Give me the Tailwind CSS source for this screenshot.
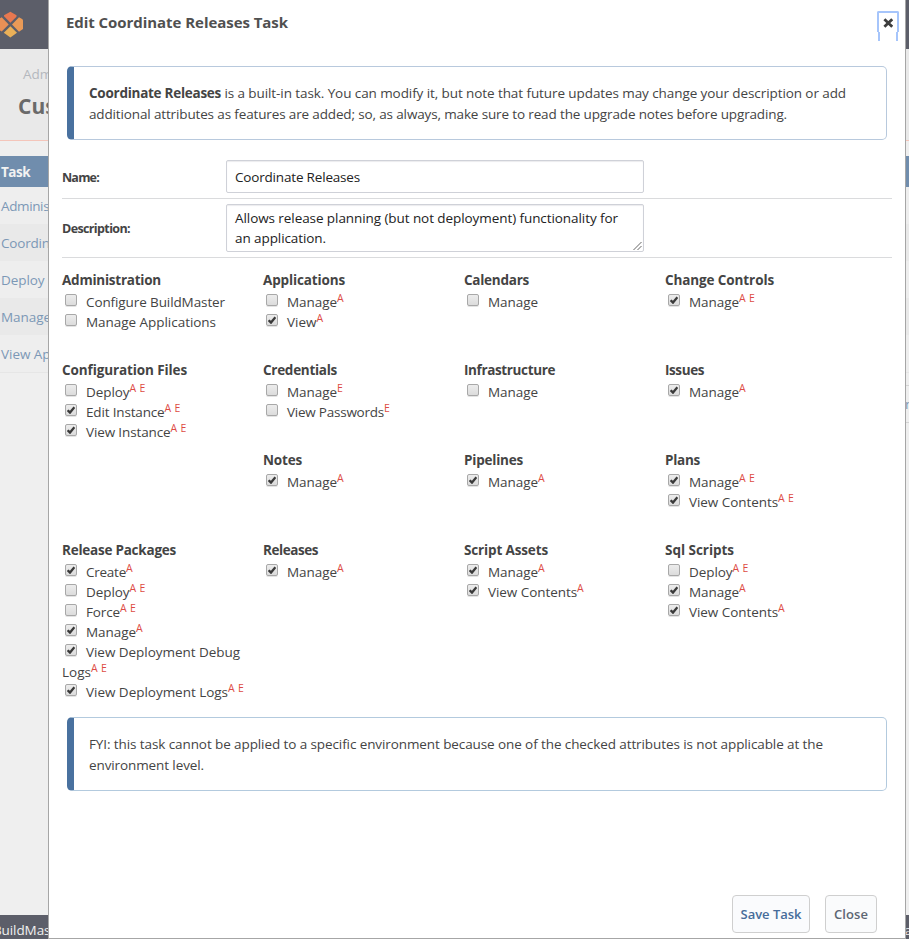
<!DOCTYPE html>
<html lang="en">
<head>
<meta charset="utf-8">
<title>Edit Coordinate Releases Task</title>
<script src="https://cdn.jsdelivr.net/npm/@tailwindcss/browser@4"></script>
</head>
<body class="relative h-[939px] w-[909px] overflow-hidden bg-[#efefef] font-['Open_Sans','Noto_Sans',sans-serif] text-[13.5px] text-[#444]">
<!-- page behind the dialog -->
<div class="flex h-[939px] flex-col whitespace-nowrap">
  <header class="h-[49px] shrink-0 bg-[#5c5e69]">
    <svg class="mt-[11px] -ml-[3px] block h-[27px] w-[27px]" viewBox="0 0 27 27">
      <path fill="#e87850" d="M13.4 .8 19.5 4.2V5.7L13.4 11.8 7 5.3V4.2Z"/>
      <path fill="#e99056" d="M4.7 6.3 11.7 13.4 4.7 20.5 2 19V7.8Z"/>
      <path fill="#e99a57" d="M22 6.3 24.7 7.8Q26 8.5 26 9.5V18L22 20.8 15 13.5Z"/>
      <path fill="#eab058" d="M13.4 15.2 20 21.8 13.4 26.4 6.8 21.8Z"/>
    </svg>
  </header>
  <div class="h-[92px] shrink-0 border-b border-[#f4c5ba] bg-[#e9e9e9] pt-[16px]">
    <div class="pl-[23px] text-[13.5px] leading-[19px] text-[#b4b8be]">Administration</div>
    <div class="pt-[8px] pl-[18px] text-[21px] leading-[28px] font-bold text-[#6a6a6a]">Customize Tasks</div>
  </div>
  <div class="h-[15px] shrink-0"></div>
  <div class="h-[31px] shrink-0 bg-[#708dad] pl-[1px] text-[13.5px] leading-[32px] font-bold text-[#f2f2f2]"><span data-w="29">Task</span></div>
  <div class="text-[13.5px] text-[#7c98b6]">
    <div class="h-[37px] bg-[#eeeeee] pl-[1px] leading-[38px]"><span data-w="65">Administer</span></div>
    <div class="h-[37px] bg-[#e9e9e9] pl-[1px] leading-[38px]"><span data-w="125">Coordinate Releases</span></div>
    <div class="h-[37px] bg-[#eeeeee] pl-[1px] leading-[38px]"><span data-w="43.5">Deploy</span></div>
    <div class="h-[37px] bg-[#e9e9e9] pl-[1px] leading-[38px]"><span data-w="50">Manage</span></div>
    <div class="h-[38px] border-b border-[#e6e6e6] bg-[#eeeeee] pl-[1px] leading-[38px]"><span data-w="103">View Application</span></div>
  </div>
  <div class="mt-[12px] flex h-[38px] justify-end text-[13.5px] leading-[37px] text-[#7c98b6]"><div class="w-[6px] border-y border-[#d4d4d4]"><span class="ml-[2px]">m</span></div></div>
  <footer class="mt-auto flex h-[24px] justify-between bg-[#5c5e69] text-[13.5px] leading-[31px] text-[#f0f0f0]"><span class="-ml-[7px]" data-w="75">BuildMaster</span><span class="-mr-[3px]">a</span></footer>
</div>

<!-- dialog -->
<section class="absolute top-0 left-[48px] flex h-[939px] w-[858px] flex-col border-x border-b border-[#a6a6a6] bg-white">
  <div class="flex h-[66px] shrink-0 justify-between pr-[6px] pl-[17px]">
    <h1 class="pt-[11px] text-[15px] leading-[22px] font-bold text-[#505050]" data-w="222">Edit Coordinate Releases Task</h1>
    <button class="mt-[11px] flex h-[30px] w-[22px] flex-col" aria-label="Close">
      <span class="flex h-[21px] w-[22px] justify-center rounded-t-[2px] border-2 border-b-0 border-[#a6c5fb] pt-[5px]">
        <svg class="h-[10px] w-[10px]" viewBox="0 0 10 10"><path d="M2.4 2.2 8.2 7.8M8.2 2.2 2.4 7.8" stroke="#3d3d3d" stroke-width="2.8" stroke-linecap="square"/></svg>
      </span>
      <span class="mx-[1px] h-[9px] w-[20px] border-x-2 border-[#a6c5fb]"></span>
    </button>
  </div>
  <div class="mr-[18px] ml-[18px] h-[74px] shrink-0 rounded-[5px] border border-l-[7px] border-[#b8c9dd] border-l-[#49719f] pt-[16px] pl-[15px] leading-[21px] whitespace-nowrap">
    <div><b data-w="132">Coordinate Releases</b><span data-w="625"> is a built-in task. You can modify it, but note that future updates may change your description or add</span></div>
    <div><span data-w="698">additional attributes as features are added; so, as always, make sure to read the upgrade notes before upgrading.</span></div>
  </div>
  <div class="mx-[13px] mt-[15px] flex h-[44px] shrink-0 border-b border-[#dadbdd] pt-[5px]">
    <div class="w-[164px] text-[12.5px] leading-[36px] font-bold"><span data-w="37">Name:</span></div>
    <div class="h-[33px] w-[418px] rounded-[2px] border border-[#cfd1d8] pl-[8px] leading-[32px] text-[#222] shadow-[inset_0_1px_1px_#ececee]"><span data-w="125">Coordinate Releases</span></div>
  </div>
  <div class="mx-[13px] flex h-[59px] shrink-0 border-b border-[#dadbdd] pt-[5px]">
    <div class="w-[164px] text-[12.5px] leading-[49px] font-bold"><span data-w="68">Description:</span></div>
    <div class="relative h-[48px] w-[418px] rounded-[2px] border border-[#cfd1d8] pt-[3px] pl-[8px] leading-[20px] whitespace-nowrap text-[#222] shadow-[inset_0_1px_1px_#ececee]">
      <div><span data-w="383">Allows release planning (but not deployment) functionality for</span></div>
      <div><span data-w="91">an application.</span></div>
      <svg class="absolute right-[1px] bottom-[1px] h-[8px] w-[9px]" viewBox="0 0 9 8"><path d="M.5 8 8.5 0M4.5 8 8.5 4" stroke="#666" stroke-width="1"/></svg>
    </div>
  </div>
  <div id="groups" class="mt-[12px] ml-[13px] grid h-[432px] shrink-0 grid-cols-[201px_201px_201px_201px] grid-rows-[90px_90px_90px_162px]"></div>
  <div class="mr-[18px] ml-[18px] mt-[15px] h-[74px] shrink-0 rounded-[5px] border border-l-[7px] border-[#b3cade] border-l-[#49719f] pt-[16px] pl-[15px] leading-[21px] whitespace-nowrap">
    <div><span data-w="734">FYI: this task cannot be applied to a specific environment because one of the checked attributes is not applicable at the</span></div>
    <div><span data-w="115">environment level.</span></div>
  </div>
  <div class="mt-auto mr-[28px] mb-[5px] flex justify-end gap-[15px] text-[13px] font-semibold">
    <button class="h-[38px] w-[78px] rounded-[4px] border border-[#cfcfcf] bg-[#fafbfd] pt-[2px] text-[#466c9a]"><span data-w="61">Save Task</span></button>
    <button class="h-[38px] w-[52px] rounded-[4px] border border-[#cfcfcf] bg-[#fafbfc] pt-[2px] text-[#5d6673]"><span data-w="34">Close</span></button>
  </div>
</section>
<script>
// title, title width, then [checked, label, label width, scopes]
const groups = [
 ['Administration',99,[0,'Configure BuildMaster',139,''],[0,'Manage Applications',130,'']],
 ['Applications',82,[0,'Manage',50,'A'],[1,'View',29.5,'A']],
 ['Calendars',65,[0,'Manage',50,'']],
 ['Change Controls',109,[1,'Manage',50,'A E']],
 ['Configuration Files',125,[0,'Deploy',43.5,'A E'],[1,'Edit Instance',78.5,'A E'],[1,'View Instance',84.5,'A E']],
 ['Credentials',74,[0,'Manage',50,'E'],[0,'View Passwords',97,'E']],
 ['Infrastructure',91,[0,'Manage',50,'']],
 ['Issues',39,[1,'Manage',50,'A']],
 null,
 ['Notes',39,[1,'Manage',50,'A']],
 ['Pipelines',59,[1,'Manage',50,'A']],
 ['Plans',35,[1,'Manage',50,'A E'],[1,'View Contents',89,'A E']],
 ['Release Packages',114,[1,'Create',40,'A'],[0,'Deploy',43.5,'A E'],[0,'Force',34,'A E'],[1,'Manage',50,'A'],[1,'View Deployment Debug',154,'','Logs',29,'A E'],[1,'View Deployment Logs',142,'A E']],
 ['Releases',55,[1,'Manage',50,'A']],
 ['Script Assets',84,[1,'Manage',50,'A'],[1,'View Contents',89,'A']],
 ['Sql Scripts',69,[0,'Deploy',43.5,'A E'],[1,'Manage',50,'A'],[1,'View Contents',89,'A']]
];
const sup = s => s ? `<span class="relative -top-[4px] text-[10.5px] text-[#dd4b44]" data-w="${s.length > 1 ? 16 : s === 'A' ? 7 : 6}">${s}</span>` : '';
const tick = '<svg class="absolute top-[1px] left-[1px] h-[8px] w-[8px]" viewBox="0 0 8 8"><path d="M.7 4.2 3 6.6 7.4 1.2" fill="none" stroke="#3a3a3a" stroke-width="2.3"/></svg>';
const row = ([on, label, w, s, more, mw, ms]) =>
 `<div class="flex h-[20px] leading-[20px]"><span class="relative mt-[2px] mr-[9px] ml-[3px] h-[12px] w-[12px] shrink-0 rounded-[2px] border border-[#a8a8a8] bg-linear-to-b from-[#ececec] to-[#dcdcdc] shadow-[0_1px_0_#e4e4e4]">${on ? tick : ''}</span><span data-w="${w}">${label}</span>${sup(s)}</div>` +
 (more ? `<div class="flex h-[20px] leading-[20px]"><span data-w="${mw}">${more}</span>${sup(ms)}</div>` : '');
document.getElementById('groups').innerHTML = groups.map(g => g
 ? `<div class="whitespace-nowrap"><div class="h-[22px] leading-[20px] font-bold"><span data-w="${g[1]}">${g[0]}</span></div>${g.slice(2).map(row).join('')}</div>`
 : '<div></div>').join('');
// track each text run to its set width
const track = () => document.querySelectorAll('[data-w]').forEach(e => {
  e.style.letterSpacing = '0px';
  const r = document.createRange(); r.selectNodeContents(e);
  const d = +e.dataset.w - r.getBoundingClientRect().width;
  e.style.letterSpacing = (d / e.textContent.length) + 'px';
});
addEventListener('load', track);
document.fonts.ready.then(track);
</script>
</body>
</html>
